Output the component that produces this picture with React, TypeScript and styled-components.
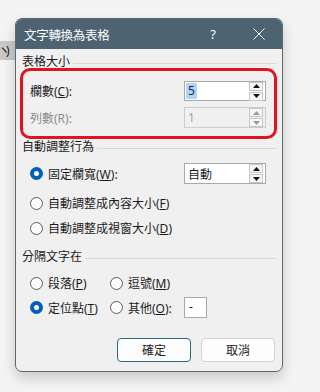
import React from 'react';
import styled, { createGlobalStyle } from 'styled-components';

const GlobalStyle = createGlobalStyle`
  html, body {
    margin: 0;
    padding: 0;
    background: #f4f4f4;
  }
  body {
    font-family: "Noto Sans", "Noto Sans CJK TC", sans-serif;
    font-size: 12px;
    color: #1b1b1b;
  }
`;

const Page = styled.div`
  position: relative;
  width: 298px;
  height: 392px;
  padding: 18px 0 0 15px;
  box-sizing: border-box;
  overflow: hidden;
`;

// fragment of the document text that shows from under the dialog
const BehindText = styled.div`
  position: absolute;
  left: 0;
  top: 41px;
  width: 24px;
  height: 19px;
  box-sizing: border-box;
  background: #c9c9c9;
  color: #222;
  font-size: 12px;
  line-height: 19px;
  letter-spacing: -4px;
  text-indent: -2px;
  white-space: nowrap;
  overflow: hidden;
`;

const Dialog = styled.div`
  position: relative;
  z-index: 1;
  width: 268px;
  height: 354px;
  box-sizing: border-box;
  border: 1px solid #5c6870;
  border-radius: 7px;
  background: #f0f0f0;
  box-shadow: 0 6px 14px rgba(0, 0, 0, 0.18);
  display: flex;
  flex-direction: column;
  overflow: hidden;
`;

const TitleBar = styled.div`
  height: 30px;
  flex-shrink: 0;
  background: #4e6371;
  color: #ffffff;
  display: flex;
  align-items: center;
  padding-left: 8px;
`;

const TitleText = styled.div`
  flex: 1;
  font-size: 12.5px;
  letter-spacing: -0.3px;
`;

const TitleButton = styled.div`
  width: 46px;
  height: 30px;
  display: flex;
  align-items: center;
  justify-content: center;
  font-size: 13px;
`;

const Body = styled.div`
  display: flex;
  flex-direction: column;
  padding: 6px 0 0 0;
`;

const GroupHeader = styled.div<{ $mt?: number }>`
  height: 13px;
  line-height: 13px;
  margin-top: ${({ $mt }) => $mt ?? 0}px;
  padding-left: 6px;
  display: flex;
  align-items: center;
  gap: 3px;
  white-space: nowrap;

  &::after {
    content: '';
    flex: 1;
    height: 1px;
    margin-top: 3px;
    margin-right: 5px;
    background: #d9d9d9;
  }
`;

const Highlight = styled.div`
  margin: 0 5px 0 4px;
  height: 71px;
  box-sizing: border-box;
  border: 3px solid #e0141c;
  border-radius: 10px;
  padding: 10px 8px 0 7px;
  display: flex;
  flex-direction: column;
  gap: 6px;
`;

const FieldRow = styled.div<{ $h?: number }>`
  height: ${({ $h }) => $h ?? 20}px;
  display: flex;
  align-items: center;
  justify-content: space-between;
`;

const Label = styled.span<{ $disabled?: boolean }>`
  color: ${({ $disabled }) => ($disabled ? '#8b8b8b' : '#1b1b1b')};
  white-space: nowrap;
`;

const SpinBox = styled.div<{ $disabled?: boolean }>`
  width: 82px;
  height: 100%;
  box-sizing: border-box;
  border: 1px solid ${({ $disabled }) => ($disabled ? '#cdcdcd' : '#a9a9a9')};
  background: ${({ $disabled }) => ($disabled ? '#f0f0f0' : '#ffffff')};
  display: flex;
  align-items: center;
  padding: 0 2px 0 1px;
`;

const SpinValue = styled.div<{ $disabled?: boolean; $pad?: number }>`
  flex: 1;
  display: flex;
  align-items: center;
  padding-left: ${({ $pad }) => $pad ?? 0}px;
  color: ${({ $disabled }) => ($disabled ? '#a3a3a3' : '#1b1b1b')};
  font-size: 12px;
`;

const Selected = styled.span`
  display: inline-block;
  height: 16px;
  line-height: 16px;
  background: #b3d3f1;
  color: #0e2e55;
  padding: 0 2px;
`;

const Arrows = styled.div`
  width: 14px;
  display: flex;
  flex-direction: column;
  gap: 1px;
`;

const ArrowBtn = styled.div<{ $disabled?: boolean }>`
  height: 7px;
  border: 1px solid #c6c6c6;
  background: #f7f7f7;
  display: flex;
  align-items: center;
  justify-content: center;
  color: ${({ $disabled }) => ($disabled ? '#9a9a9a' : '#111')};
`;

const Section = styled.div<{ $mt: number; $gap: number }>`
  margin-top: ${({ $mt }) => $mt}px;
  padding: 0 16px 0 14px;
  display: flex;
  flex-direction: column;
  gap: ${({ $gap }) => $gap}px;
`;

const RadioRow = styled.div<{ $h?: number; $mt?: number }>`
  height: ${({ $h }) => $h ?? 18}px;
  margin-top: ${({ $mt }) => $mt ?? 0}px;
  display: flex;
  align-items: center;
`;

const RadioItem = styled.label<{ $w?: number }>`
  display: flex;
  align-items: center;
  gap: 5px;
  width: ${({ $w }) => ($w ? `${$w}px` : 'auto')};
  flex: ${({ $w }) => ($w ? '0 0 auto' : '1')};
  white-space: nowrap;
`;

const RadioDot = styled.span<{ $checked?: boolean }>`
  width: 13px;
  height: 13px;
  box-sizing: border-box;
  border-radius: 50%;
  border: ${({ $checked }) => ($checked ? 'none' : '1px solid #5e5e5e')};
  background: ${({ $checked }) => ($checked ? '#005fb8' : '#fbfbfb')};
  display: flex;
  align-items: center;
  justify-content: center;
  flex-shrink: 0;

  &::after {
    content: '';
    display: ${({ $checked }) => ($checked ? 'block' : 'none')};
    width: 5px;
    height: 5px;
    border-radius: 50%;
    background: #ffffff;
  }
`;

const SmallInput = styled.div`
  width: 23px;
  height: 21px;
  box-sizing: border-box;
  border: 1px solid #a9a9a9;
  background: #ffffff;
  padding-left: 4px;
  line-height: 18px;
`;

const ButtonBar = styled.div`
  margin-top: 20px;
  padding-right: 7px;
  display: flex;
  justify-content: flex-end;
  gap: 10px;
`;

const Button = styled.div<{ $primary?: boolean }>`
  width: 74px;
  height: 24px;
  box-sizing: border-box;
  border-radius: 4px;
  border: 1px solid ${({ $primary }) => ($primary ? '#2b6c83' : '#d3d3d3')};
  background: #fdfdfd;
  display: flex;
  align-items: center;
  justify-content: center;
`;

const Up = () => (
  <svg width="7" height="4" viewBox="0 0 7 4">
    <path d="M3.5 0 L7 4 L0 4 Z" fill="currentColor" />
  </svg>
);

const Down = () => (
  <svg width="7" height="4" viewBox="0 0 7 4">
    <path d="M0 0 L7 0 L3.5 4 Z" fill="currentColor" />
  </svg>
);

const Spinner: React.FC<{ disabled?: boolean }> = ({ disabled }) => (
  <Arrows>
    <ArrowBtn $disabled={disabled}>
      <Up />
    </ArrowBtn>
    <ArrowBtn $disabled={disabled}>
      <Down />
    </ArrowBtn>
  </Arrows>
);

const App: React.FC = () => {
  return (
    <>
      <GlobalStyle />
      <Page>
        <BehindText>ヽ)</BehindText>
        <Dialog>
          <TitleBar>
            <TitleText>文字轉換為表格</TitleText>
            <TitleButton>?</TitleButton>
            <TitleButton>
              <svg width="12" height="12" viewBox="0 0 12 12">
                <path d="M0.5 0.5 L11.5 11.5 M11.5 0.5 L0.5 11.5" stroke="#fff" strokeWidth="1" />
              </svg>
            </TitleButton>
          </TitleBar>

          <Body>
            <GroupHeader>表格大小</GroupHeader>
            <Highlight>
              <FieldRow $h={20}>
                <Label>
                  欄數(<u>C</u>):
                </Label>
                <SpinBox>
                  <SpinValue>
                    <Selected>5</Selected>
                  </SpinValue>
                  <Spinner />
                </SpinBox>
              </FieldRow>
              <FieldRow $h={21}>
                <Label $disabled>列數(R):</Label>
                <SpinBox $disabled>
                  <SpinValue $disabled $pad={2}>1</SpinValue>
                  <Spinner disabled />
                </SpinBox>
              </FieldRow>
            </Highlight>

            <GroupHeader $mt={1}>自動調整行為</GroupHeader>
            <Section $mt={10} $gap={0}>
              <RadioRow $h={21}>
                <RadioItem>
                  <RadioDot $checked />
                  <span>
                    固定欄寬(<u>W</u>):
                  </span>
                </RadioItem>
                <SpinBox>
                  <SpinValue $pad={2}>自動</SpinValue>
                  <Spinner />
                </SpinBox>
              </RadioRow>
              <RadioRow $mt={10}>
                <RadioItem>
                  <RadioDot />
                  <span>
                    自動調整成內容大小(<u>F</u>)
                  </span>
                </RadioItem>
              </RadioRow>
              <RadioRow $mt={7}>
                <RadioItem>
                  <RadioDot />
                  <span>
                    自動調整成視窗大小(<u>D</u>)
                  </span>
                </RadioItem>
              </RadioRow>
            </Section>

            <GroupHeader $mt={13}>分隔文字在</GroupHeader>
            <Section $mt={11} $gap={5}>
              <RadioRow>
                <RadioItem $w={80}>
                  <RadioDot />
                  <span>
                    段落(<u>P</u>)
                  </span>
                </RadioItem>
                <RadioItem $w={80}>
                  <RadioDot />
                  <span>
                    逗號(<u>M</u>)
                  </span>
                </RadioItem>
              </RadioRow>
              <RadioRow $h={21}>
                <RadioItem $w={80}>
                  <RadioDot $checked />
                  <span>
                    定位點(<u>T</u>)
                  </span>
                </RadioItem>
                <RadioItem $w={74}>
                  <RadioDot />
                  <span>
                    其他(<u>O</u>):
                  </span>
                </RadioItem>
                <SmallInput>-</SmallInput>
              </RadioRow>
            </Section>

            <ButtonBar>
              <Button $primary>確定</Button>
              <Button>取消</Button>
            </ButtonBar>
          </Body>
        </Dialog>
      </Page>
    </>
  );
};

export default App;
